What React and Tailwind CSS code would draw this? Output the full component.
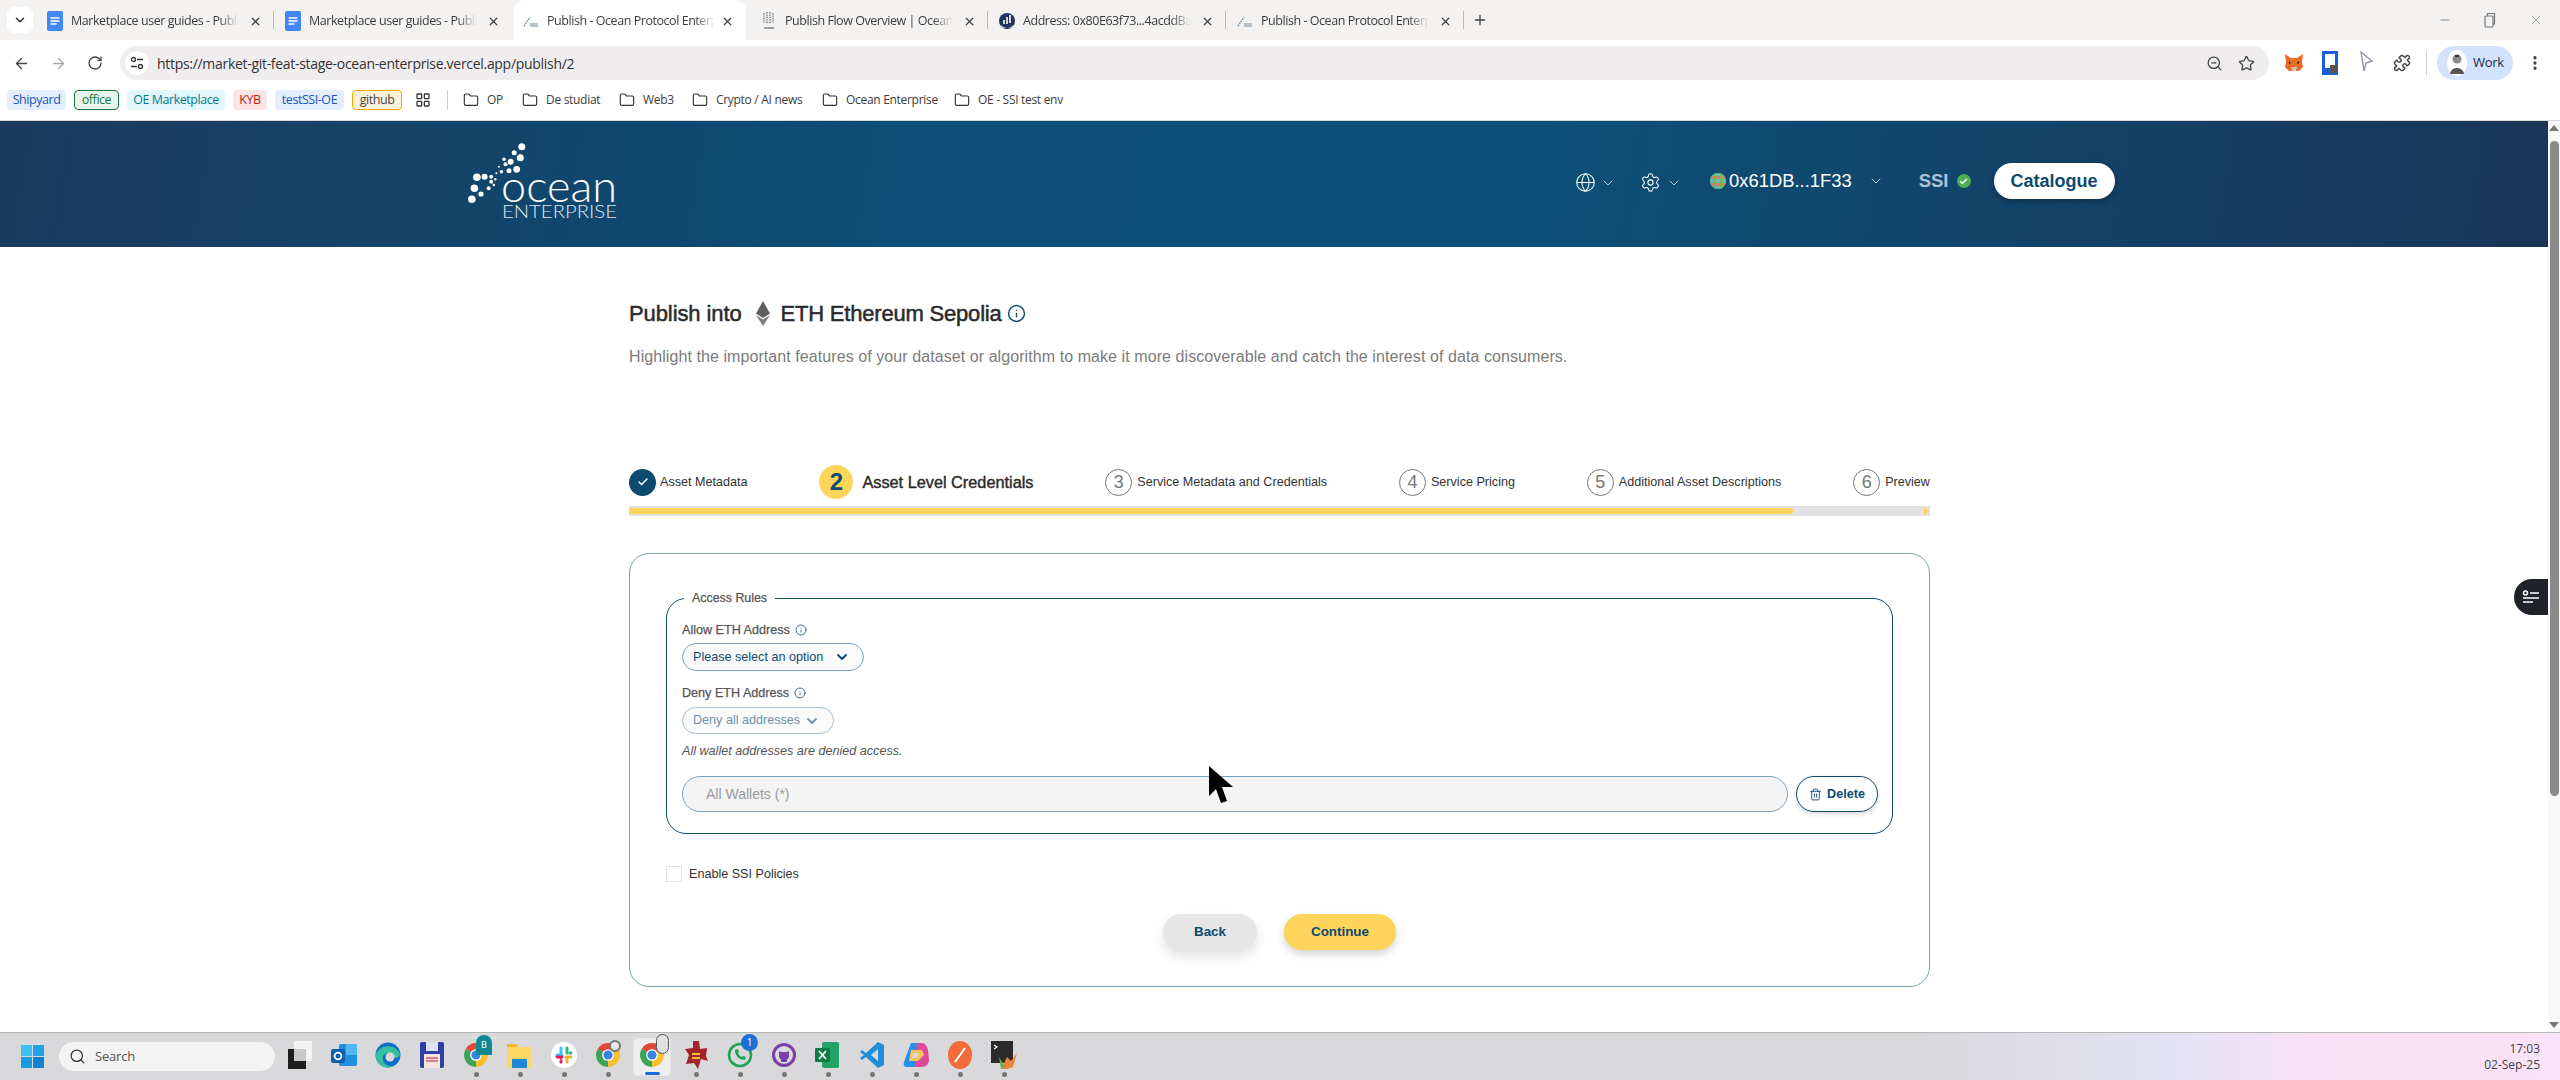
import React from 'react';
import {
  ArrowLeft, ArrowRight, RotateCw, ZoomOut, Star, Puzzle, MoreVertical, X, Plus, Minus,
  Search, LayoutGrid, Folder, Globe, Settings, ChevronDown, Info, Check, Trash2,
} from 'lucide-react';

const TABS = [
  { title: 'Marketplace user guides - Publi', icon: 'doc' },
  { title: 'Marketplace user guides - Publi', icon: 'doc' },
  { title: 'Publish - Ocean Protocol Enterp', icon: 'ocean', active: true },
  { title: 'Publish Flow Overview | Ocean Pr', icon: 'dots' },
  { title: 'Address: 0x80E63f73...4acddBaa', icon: 'scan' },
  { title: 'Publish - Ocean Protocol Enterp', icon: 'ocean' },
];

const CHIPS = [
  { label: 'Shipyard', cls: 'w-[59px] bg-[#e3edfb] text-[#1a55c0]' },
  { label: 'office', cls: 'w-[45px] bg-[#e9f4ed] text-[#1c7a3e] border border-[#1c7a3e]' },
  { label: 'OE Marketplace', cls: 'w-[98px] bg-[#e2f7fb] text-[#0b7a88]' },
  { label: 'KYB', cls: 'w-[34px] bg-[#fce4e4] text-[#c5221f]' },
  { label: 'testSSI-OE', cls: 'w-[69px] bg-[#e3edfb] text-[#1a55c0]' },
  { label: 'github', cls: 'w-[50px] bg-[#fef3d8] text-[#444444] border border-[#f0a800]' },
];

const FOLDERS = [
  { label: 'OP', cls: 'w-[59px]' },
  { label: 'De studiat', cls: 'w-[97px]' },
  { label: 'Web3', cls: 'w-[73px]' },
  { label: 'Crypto / AI news', cls: 'w-[130px]' },
  { label: 'Ocean Enterprise', cls: 'w-[132px]' },
  { label: 'OE - SSI test env', cls: 'w-[120px]' },
];

function DocIcon() {
  return (
    <svg width="16" height="20" viewBox="0 0 16 20">
      <rect width="16" height="20" rx="2" fill="#4285f4" />
      <path d="M3.5 7h9M3.5 10h9M3.5 13h6" stroke="#fff" strokeWidth="1.6" />
    </svg>
  );
}

function OceanFavicon() {
  return (
    <svg width="16" height="16" viewBox="0 0 16 16">
      <path d="M1 13 L7 4" stroke="#6f8ea3" strokeWidth="1.5" strokeDasharray="1.5 1" />
      <path d="M7 11h8M7 13h8" stroke="#9db1bf" strokeWidth="1.4" />
    </svg>
  );
}

function DotsFavicon() {
  return (
    <svg width="16" height="20" viewBox="0 0 16 20">
      <path d="M3 2v10M6 1v12M9 1v12M12 2v10" stroke="#77807f" strokeWidth="1.5" strokeDasharray="1.4 1" />
      <path d="M3 17h10" stroke="#9aa2a1" strokeWidth="2" />
    </svg>
  );
}

function ScanFavicon() {
  return (
    <svg width="16" height="18" viewBox="0 0 16 18">
      <circle cx="8" cy="9" r="8" fill="#21325b" />
      <path d="M2 13c4 4 9 4 12 0v3H2z" fill="#b9c8d6" />
      <path d="M5 12V8M8 12V5M11 11V3" stroke="#fff" strokeWidth="1.6" />
    </svg>
  );
}

const FAVICONS = { doc: DocIcon, ocean: OceanFavicon, dots: DotsFavicon, scan: ScanFavicon };

function Tab({ tab, hideSep }) {
  const Icon = FAVICONS[tab.icon];
  return (
    <div className={`relative flex h-[40px] items-center pr-[12px] pt-[2px] ${tab.active ? 'ml-[2px] mr-[4px] w-[232px] rounded-t-[10px] bg-white pl-[9px]' : 'w-[238px] pl-[11px]'}`}>
      <span className="flex w-[24px] shrink-0 items-center"><Icon /></span>
      <span className="w-[168px] overflow-hidden whitespace-nowrap text-[12.5px] text-[#3c3c3c] [font-family:'Open_Sans',sans-serif] tracking-[-0.45px] [mask-image:linear-gradient(90deg,#000_88%,transparent)]">{tab.title}</span>
      <X size={13} strokeWidth={2.4} className="ml-auto text-[#444444]" />
      {!hideSep && <span className="absolute right-0 top-[11px] h-[18px] w-px bg-[#b9b9b9]" />}
    </div>
  );
}

function TabStrip() {
  return (
    <div className="flex h-[40px] shrink-0 items-end bg-[#f3f2f1]">
      <div className="mb-[7px] ml-[7px] mr-[3px] flex h-[26px] w-[26px] items-center justify-center rounded-[7px] bg-white">
        <ChevronDown size={14} strokeWidth={2.6} className="text-[#333333]" />
      </div>
      {TABS.map((tab, i) => (
        <Tab key={i} tab={tab} hideSep={tab.active || i === 1} />
      ))}
      <Plus size={16} strokeWidth={2} className="mb-[12px] ml-[8px] text-[#444444]" />
      <div className="mb-[12px] ml-auto flex w-[122px] items-center justify-between pr-[16px] text-[#777777]">
        <Minus size={14} strokeWidth={1.4} />
        <svg width="12" height="16" viewBox="0 0 12 16" fill="none" stroke="#777777" strokeWidth="1.2">
          <rect x="1" y="4" width="8" height="11" rx="1" />
          <path d="M3.5 4V1.5h7V12H9" />
        </svg>
        <X size={16} strokeWidth={1.1} />
      </div>
    </div>
  );
}

function FoxIcon() {
  return (
    <svg width="18" height="24" viewBox="0 0 18 24">
      <path d="M0 3l6 4h6l6-4-1 8 1 5-4 4H4l-4-4 1-5z" fill="#f0682c" />
      <path d="M6 7l-1 6 4 2 4-2-1-6z" fill="#e2761b" />
      <path d="M6 16h6l-1 4H7z" fill="#d7c1b3" />
      <path d="M4 10l2 2-2 1zM14 10l-2 2 2 1z" fill="#2b1a12" />
    </svg>
  );
}

function Toolbar() {
  return (
    <div className="flex h-[40px] shrink-0 items-start bg-white pt-[6px] text-[#444444]">
      <div className="flex h-[34px] w-[120px] items-center pl-[13px]">
        <ArrowLeft size={17} strokeWidth={1.9} />
        <ArrowRight size={17} strokeWidth={1.9} className="ml-[20px] text-[#a8a8a8]" />
        <RotateCw size={16} strokeWidth={1.9} className="ml-[20px]" />
      </div>
      <div className="flex h-[34px] w-[2149px] items-center rounded-full bg-[#efedee] pl-[5px] pr-[14px]">
        <span className="flex h-[24px] w-[24px] items-center justify-center rounded-full bg-white">
          <svg width="14" height="14" viewBox="0 0 14 14" fill="none" stroke="#333333" strokeWidth="1.3">
            <circle cx="3.5" cy="3.5" r="2" />
            <circle cx="10.5" cy="10.5" r="2" />
            <path d="M7 3.5h6M1 10.5h6" />
          </svg>
        </span>
        <span className="ml-[8px] text-[14px] text-[#333333] [font-family:'Open_Sans',sans-serif] tracking-[-0.3px]">https://market-git-feat-stage-ocean-enterprise.vercel.app/publish/2</span>
        <ZoomOut size={17} strokeWidth={1.8} className="ml-auto" />
        <Star size={17} strokeWidth={1.8} className="ml-[15px]" />
      </div>
      <div className="flex h-[34px] flex-1 items-center pl-[16px]">
        <FoxIcon />
        <svg width="16" height="24" viewBox="0 0 16 24" className="ml-[19px]">
          <rect width="16" height="24" fill="#1a5fd8" />
          <path d="M3 3h10v11l-5 3H3z" fill="#fff" />
          <rect x="8" y="14" width="8" height="8" fill="#555555" />
        </svg>
        <svg width="14" height="24" viewBox="0 0 14 24" fill="none" className="ml-[21px]">
          <path d="M2 1l3 19 2-8 6-2z" stroke="#9b8fb0" strokeWidth="1.4" />
        </svg>
        <Puzzle size={18} strokeWidth={2} className="ml-[20px]" />
        <span className="ml-[15px] h-[24px] w-px bg-[#d0d0d0]" />
        <div className="ml-[10px] flex h-[34px] w-[76px] items-center rounded-full bg-[#d3e3fd] pl-[10px]">
          <svg width="20" height="26" viewBox="0 0 20 26">
            <ellipse cx="10" cy="13" rx="10" ry="13" fill="#ffffff" />
            <circle cx="10" cy="9" r="4.5" fill="#8a8a8a" />
            <path d="M8 6h4" stroke="#222222" strokeWidth="1.6" />
            <path d="M3 24c1-8 13-8 14 0z" fill="#555555" />
          </svg>
          <span className="ml-[6px] text-[13px] text-[#1c2b4a] [font-family:'Open_Sans',sans-serif] tracking-[-0.3px]">Work</span>
        </div>
        <MoreVertical size={18} strokeWidth={2.4} className="ml-[13px]" />
      </div>
    </div>
  );
}

function Bookmarks() {
  return (
    <div className="flex h-[41px] shrink-0 items-center border-b border-[#d8d8d8] bg-white pl-[7px] [font-family:'Open_Sans',sans-serif]">
      <div className="flex gap-[8px]">
        {CHIPS.map((c) => (
          <span key={c.label} className={`flex h-[20px] items-center justify-center rounded-[4px] text-[12.5px] tracking-[-0.45px] ${c.cls}`}>{c.label}</span>
        ))}
      </div>
      <LayoutGrid size={16} strokeWidth={1.9} className="ml-[13px] text-[#333333]" />
      <span className="ml-[16px] mr-[15px] h-[20px] w-px bg-[#d0d0d0]" />
      {FOLDERS.map((f) => (
        <div key={f.label} className={`flex items-center gap-[8px] ${f.cls}`}>
          <Folder size={16} strokeWidth={1.7} className="text-[#333333]" />
          <span className="whitespace-nowrap text-[12px] tracking-[-0.3px] text-[#3c3c3c]">{f.label}</span>
        </div>
      ))}
    </div>
  );
}

function OceanLogo() {
  const dots = [
    [53.8, 2.7, 3.5], [52.3, 13.7, 3.5], [46.2, 8.7, 2.5], [42.6, 17.7, 3], [48.7, 25.3, 3.4], [41, 26.7, 2.5], [36, 15.3, 1.8],
    [37.5, 20.3, 2], [33.4, 27.7, 1.8], [30.9, 22.7, 1], [28.3, 29.3, 1], [23.2, 32.7, 2], [16.6, 32.7, 3], [8.9, 33.3, 3.8],
    [27.3, 35.3, 1.2], [23.2, 37.7, 2], [25.8, 41, 1.2], [20.7, 44.3, 2], [13, 50, 2.6], [6.4, 44.3, 3.8], [3.8, 55.3, 3.8],
  ];
  return (
    <svg width="150" height="76" viewBox="0 0 150 76" className="overflow-visible">
      {dots.map(([x, y, r], i) => <circle key={i} cx={x} cy={y} r={r} fill="#ffffff" />)}
      <text x="33" y="58" fill="#ffffff" fontFamily="Lato, sans-serif" fontWeight="300" fontSize="44" textLength="116" lengthAdjust="spacingAndGlyphs">ocean</text>
      <text x="34" y="74" fill="#dfe8ef" fontFamily="Lato, sans-serif" fontWeight="300" fontSize="18" textLength="115" lengthAdjust="spacingAndGlyphs">ENTERPRISE</text>
    </svg>
  );
}

function Identicon() {
  return (
    <svg width="16" height="16" viewBox="0 0 16 16">
      <clipPath id="avatar"><circle cx="8" cy="8" r="8" /></clipPath>
      <g clipPath="url(#avatar)">
        <rect width="16" height="16" fill="#55c7b0" />
        <path d="M0 3h16v3H0zM0 10h16v3H0z" fill="#e8746a" />
        <path d="M3 0h3v16H3zM10 0h3v16h-3z" fill="#7fb35a" />
      </g>
    </svg>
  );
}

function Header() {
  return (
    <header className="flex h-[126px] shrink-0 items-start bg-[linear-gradient(100deg,#1c3a5e_0%,#0c4e75_35%,#0c5078_60%,#1a3558_100%)] pl-[468px] pt-[23px] text-white">
      <OceanLogo />
      <div className="ml-[957px] mt-[19px] flex h-[36px] items-center">
        <Globe size={21} strokeWidth={1.2} className="mt-[3px]" />
        <ChevronDown size={16} strokeWidth={1.3} className="ml-[4px] mt-[3px] text-[#cfdbe4]" />
        <Settings size={21} strokeWidth={1.2} className="ml-[24px] mt-[3px]" />
        <ChevronDown size={16} strokeWidth={1.3} className="ml-[5px] mt-[3px] text-[#cfdbe4]" />
        <span className="ml-[28px]"><Identicon /></span>
        <span className="ml-[3px] text-[18.4px] leading-none">0x61DB...1F33</span>
        <ChevronDown size={16} strokeWidth={1.3} className="ml-[16px] text-[#cfdbe4]" />
        <span className="ml-[35px] text-[18.5px] font-bold text-[#a9c0d8] leading-none">SSI</span>
        <span className="ml-[8px] flex h-[14px] w-[14px] items-center justify-center rounded-full bg-[#4fae52]">
          <Check size={9} strokeWidth={4} className="text-white" />
        </span>
        <button className="ml-[23px] h-[36px] w-[121px] rounded-full bg-white text-[18px] font-bold text-[#0d4a70] shadow-[0_2px_6px_rgba(0,0,0,0.3)]">Catalogue</button>
      </div>
    </header>
  );
}

function Step({ n, label, done, active }) {
  if (done) {
    return (
      <div className="flex items-center gap-[4px]">
        <span className="flex h-[27px] w-[27px] items-center justify-center rounded-full bg-[#0d4a70]">
          <Check size={12} strokeWidth={3} className="text-white" />
        </span>
        <span className="text-[12.6px] text-[#333333]">{label}</span>
      </div>
    );
  }
  if (active) {
    return (
      <div className="flex items-center gap-[9px]">
        <span className="flex h-[34px] w-[34px] items-center justify-center rounded-full bg-[#ffd45a] text-[24px] font-bold text-[#0d4a70]">{n}</span>
        <span className="text-[16.3px] text-[#2a2a2a] [-webkit-text-stroke:0.4px_#2a2a2a]">{label}</span>
      </div>
    );
  }
  return (
    <div className="flex items-center gap-[5px]">
      <span className="flex h-[27px] w-[27px] items-center justify-center rounded-full border border-[#777777] text-[18px] text-[#777777]">{n}</span>
      <span className="text-[12.6px] text-[#333333]">{label}</span>
    </div>
  );
}

function FieldLabel({ children }) {
  return (
    <div className="flex items-center gap-[5px] text-[12.6px] leading-[16px] text-[#555555] [-webkit-text-stroke:0.25px_#555555]">
      {children}
      <Info size={12} strokeWidth={1.6} className="text-[#0d4a70]" />
    </div>
  );
}

function PublishForm() {
  return (
    <section className="mt-[37px] flex h-[434px] w-[1301px] flex-col rounded-[20px] border border-[#7ba3bd] px-[36px] pt-[36px]">
      <fieldset className="h-[244px] rounded-[20px] border border-[#0d4a70] pl-[15px] pr-[14px]">
        <legend className="ml-[2px] px-[8px] text-[12.4px] leading-[16px] text-[#555555] [-webkit-text-stroke:0.25px_#555555]">Access Rules</legend>
        <div className="mt-[16px]"><FieldLabel>Allow ETH Address</FieldLabel></div>
        <button className="mt-[5px] flex h-[28px] w-[182px] items-center justify-between rounded-full border border-[#7ba3bd] bg-[#fafafa] pl-[10px] pr-[13px] text-[12.6px] text-[#0d4a70]">
          Please select an option
          <ChevronDown size={16} strokeWidth={2.8} />
        </button>
        <div className="mt-[14px]"><FieldLabel>Deny ETH Address</FieldLabel></div>
        <button className="mt-[6px] flex h-[27px] w-[152px] items-center justify-between rounded-full border border-[#a5c0d2] bg-[#fafafa] pl-[10px] pr-[13px] text-[12.6px] text-[#6a93ab]">
          Deny all addresses
          <ChevronDown size={16} strokeWidth={2.8} />
        </button>
        <p className="mt-[9px] text-[12.6px] italic leading-[16px] text-[#555555]">All wallet addresses are denied access.</p>
        <div className="mt-[17px] flex gap-[8px]">
          <div className="flex h-[36px] flex-1 items-center rounded-full border border-[#7ba3bd] bg-[#f4f4f4] pl-[23px] text-[14px] text-[#9a9a9a]">All Wallets (*)</div>
          <button className="flex h-[36px] w-[82px] items-center justify-center gap-[5px] rounded-full border border-[#0d4a70] bg-white text-[12.6px] font-semibold text-[#0d4a70] shadow-[0_2px_5px_rgba(0,0,0,0.15)]">
            <Trash2 size={13} strokeWidth={1.7} />
            Delete
          </button>
        </div>
      </fieldset>
      <label className="mt-[31px] flex items-center gap-[7px] text-[12.6px] text-[#333333]">
        <span className="h-[16px] w-[16px] border border-[#e2e2e2] bg-white" />
        Enable SSI Policies
      </label>
      <div className="mt-[30px] flex justify-center gap-[27px]">
        <button className="h-[36px] w-[94px] rounded-full bg-[#e6e6e6] text-[13.4px] font-bold text-[#0d4a70] shadow-[0_6px_12px_rgba(0,0,0,0.12)]">Back</button>
        <button className="h-[36px] w-[112px] rounded-full bg-[#ffd45a] text-[13.4px] font-bold text-[#0d4a70] shadow-[0_4px_8px_rgba(0,0,0,0.18)]">Continue</button>
      </div>
    </section>
  );
}

function Page() {
  return (
    <div className="relative flex min-w-0 flex-1 flex-col overflow-hidden bg-white [font-family:'Liberation_Sans',Arial,sans-serif]">
      <Header />
      <div className="pl-[629px]">
        <h1 className="mt-[53px] flex h-[26px] items-center text-[22px] font-normal tracking-[-0.1px] text-[#2a2a2a] [-webkit-text-stroke:0.5px_#2a2a2a]">
          Publish into
          <svg width="14" height="25" viewBox="0 0 14 25" className="ml-[14px] mr-[11px]">
            <path d="M7 0l7 12.5L7 17 0 12.5z" fill="#5f5f5f" />
            <path d="M7 18.5l7-4.5L7 25 0 14z" fill="#7d7d7d" />
          </svg>
          <span className="tracking-[-0.2px]">ETH Ethereum Sepolia</span>
          <Info size={19} strokeWidth={1.8} className="ml-[5px] text-[#0d4a70]" />
        </h1>
        <p className="mt-[19px] text-[16px] leading-[24px] tracking-[0.075px] text-[#7b7b7b]">
          Highlight the important features of your dataset or algorithm to make it more discoverable and catch the interest of data consumers.
        </p>
        <div className="mt-[96px] flex h-[34px] w-[1301px] items-center justify-between">
          <Step label="Asset Metadata" done />
          <Step n="2" label="Asset Level Credentials" active />
          <Step n="3" label="Service Metadata and Credentials" />
          <Step n="4" label="Service Pricing" />
          <Step n="5" label="Additional Asset Descriptions" />
          <Step n="6" label="Preview" />
        </div>
        <div className="relative mt-[7px] flex h-[10px] w-[1301px] items-center bg-[#e2e2e2]">
          <div className="h-[6px] w-[1164px] rounded-r-full bg-[#ffd45a]" />
          <span className="absolute right-[1px] h-0 w-0 border-y-[4px] border-l-[5px] border-y-transparent border-l-[#ffd45a]" />
        </div>
        <PublishForm />
      </div>
      {/* floating panel toggle */}
      <div className="absolute right-0 top-[458px] flex h-[36px] w-[34px] items-center justify-center rounded-l-full bg-[#1f2329]">
        <svg width="18" height="18" viewBox="0 0 18 18" fill="none" stroke="#ffffff" strokeWidth="1.5">
          <circle cx="3.5" cy="5" r="2" />
          <path d="M8 5h9M1 10h16M1 14h10" />
        </svg>
      </div>
      {/* mouse pointer */}
      <svg width="24" height="38" viewBox="0 0 24 38" className="absolute left-[1209px] top-[645px]">
        <path d="M0 0v30l7-7 5 14 6-2-5-14h11z" fill="#000000" />
      </svg>
    </div>
  );
}

function Scrollbar() {
  return (
    <div className="flex w-[12px] shrink-0 flex-col items-center bg-[#f8f8f8]">
      <span className="mt-[4px] h-0 w-0 border-x-[5px] border-b-[6px] border-x-transparent border-b-[#777777]" />
      <span className="mt-[10px] h-[655px] w-[9px] rounded-full bg-[#8b8b8b]" />
      <span className="mt-auto mb-[4px] h-0 w-0 border-x-[5px] border-t-[6px] border-x-transparent border-t-[#777777]" />
    </div>
  );
}

function Chrome({ badge }) {
  return (
    <span className="relative block h-[26px] w-[26px]">
      <svg width="26" height="26" viewBox="0 0 24 24">
        <path d="M12 12L2.47 6.5A11 11 0 0 1 21.53 6.5z" fill="#e0483a" />
        <path d="M12 12L21.53 6.5A11 11 0 0 1 12 23z" fill="#f5c02e" />
        <path d="M12 12L12 23A11 11 0 0 1 2.47 6.5z" fill="#3aa655" />
        <circle cx="12" cy="12" r="5.4" fill="#ffffff" />
        <circle cx="12" cy="12" r="4.2" fill="#3b82e6" />
      </svg>
      {badge}
    </span>
  );
}

const TASK_ICONS = [
  {
    dot: false,
    el: (
      <svg width="24" height="28" viewBox="0 0 24 28">
        <rect x="6" y="0" width="18" height="20" fill="#f4f4f4" />
        <rect x="0" y="8" width="18" height="20" fill="#1d1d1d" />
        <rect x="6" y="8" width="12" height="12" fill="#c8c8c8" />
      </svg>
    ),
  },
  {
    dot: false,
    el: (
      <svg width="26" height="26" viewBox="0 0 26 26">
        <rect x="8" y="2" width="18" height="22" rx="2" fill="#1f8fe0" />
        <rect x="15" y="2" width="11" height="11" fill="#50b8f0" />
        <rect x="0" y="7" width="14" height="14" rx="2" fill="#0f5fb0" />
        <circle cx="7" cy="14" r="3.4" fill="none" stroke="#fff" strokeWidth="1.8" />
      </svg>
    ),
  },
  {
    dot: false,
    el: (
      <svg width="26" height="26" viewBox="0 0 26 26">
        <circle cx="13" cy="13" r="12.5" fill="#0f6fc6" />
        <path d="M1 13C3 3 20 0 25 12c0 4-6 5-8 3 1-5-11-6-9 3 1 4 5 7 11 6-9 5-19-2-18-11z" fill="#35c1a0" />
        <circle cx="15" cy="15" r="4.5" fill="#d9d9dc" />
      </svg>
    ),
  },
  {
    dot: false,
    el: (
      <svg width="24" height="26" viewBox="0 0 24 26">
        <rect width="24" height="26" rx="2" fill="#2c3fa8" />
        <rect x="6" y="0" width="12" height="9" fill="#dfe3ef" />
        <rect x="4" y="12" width="16" height="14" fill="#f4e4df" />
        <path d="M6 16h12M6 19h12" stroke="#d65a5a" strokeWidth="1.4" />
      </svg>
    ),
  },
  {
    dot: true,
    el: (
      <Chrome badge={<span className="absolute -right-[3px] -top-[7px] flex h-[20px] w-[16px] items-center justify-center rounded-t-full bg-[#0f8a94] text-[9px] text-white">B</span>} />
    ),
  },
  {
    dot: true,
    el: (
      <svg width="26" height="26" viewBox="0 0 26 26">
        <path d="M0 2h9l2 3h0v21H0z" fill="#f0b429" />
        <rect y="5" width="24" height="21" rx="1" fill="#fdd663" />
        <rect x="5" y="17" width="15" height="9" rx="1" fill="#1e88d8" />
      </svg>
    ),
  },
  {
    dot: true,
    el: (
      <svg width="26" height="26" viewBox="0 0 26 26">
        <circle cx="13" cy="13" r="13" fill="#ffffff" />
        <path d="M10 6v5M6 13H11" stroke="#36c5f0" strokeWidth="3" strokeLinecap="round" />
        <path d="M16 6v5M20 11h-1" stroke="#2eb67d" strokeWidth="3" strokeLinecap="round" />
        <path d="M16 20v-5M20 15h-5" stroke="#ecb22e" strokeWidth="3" strokeLinecap="round" />
        <path d="M10 20v-1M6 15h5M10 15v1" stroke="#e01e5a" strokeWidth="3" strokeLinecap="round" />
      </svg>
    ),
  },
  {
    dot: true,
    el: <Chrome badge={<span className="absolute right-[0px] -top-[2px] h-[12px] w-[12px] rounded-full border-2 border-[#777777] bg-[#e8e8e8]" />} />,
  },
  {
    dot: true,
    active: true,
    el: <Chrome badge={<span className="absolute -right-[4px] -top-[8px] h-[20px] w-[13px] rounded-full bg-[#e0e0e0] border border-[#555555]" />} />,
  },
  {
    dot: true,
    el: (
      <svg width="24" height="28" viewBox="0 0 24 28">
        <path d="M9 0h6l1 8 7-1-1 8 2 5-7-2-3 10-4-6-8 1 3-9-4-6 8-1z" fill="#a3232b" />
        <path d="M8 13h8M8 17h8" stroke="#f5c02e" strokeWidth="1.8" />
      </svg>
    ),
  },
  {
    dot: true,
    el: (
      <span className="relative block h-[26px] w-[26px]">
        <svg width="26" height="26" viewBox="0 0 26 26" fill="none">
          <circle cx="13" cy="13" r="11" stroke="#23a455" strokeWidth="2.6" />
          <path d="M8 8c0 6 4 10 10 10l1-3-3-1-1 1c-2-1-3-2-4-4l1-1-1-3z" fill="#23a455" />
        </svg>
        <span className="absolute -right-[5px] -top-[8px] flex h-[17px] w-[17px] items-center justify-center rounded-full bg-[#1a6fd8] text-[10px] text-white">1</span>
      </span>
    ),
  },
  {
    dot: true,
    el: (
      <svg width="24" height="26" viewBox="0 0 24 26" fill="none">
        <circle cx="12" cy="13" r="10.5" stroke="#7a3fa8" strokeWidth="3" />
        <path d="M7 9l2 1h6l2-1v6l-2 3v2H9v-2l-2-3z" fill="#7a3fa8" />
      </svg>
    ),
  },
  {
    dot: true,
    el: (
      <svg width="26" height="28" viewBox="0 0 26 28">
        <rect x="7" y="1" width="17" height="26" rx="2" fill="#22a366" />
        <rect x="0" y="7" width="15" height="14" rx="1" fill="#107c41" />
        <path d="M4 10l7 8M11 10l-7 8" stroke="#ffffff" strokeWidth="1.7" />
      </svg>
    ),
  },
  {
    dot: true,
    el: (
      <svg width="24" height="26" viewBox="0 0 24 26">
        <path d="M18 0l6 3v20l-6 3L6 15l-4 3-2-2 4-3-4-3 2-2 4 3z" fill="#1f8fd8" />
        <path d="M18 7l-7 6 7 6z" fill="#d9d9dc" />
      </svg>
    ),
  },
  {
    dot: true,
    el: (
      <svg width="26" height="26" viewBox="0 0 26 26">
        <path d="M8 1h10l-6 24H4c-3 0-4-2-3-5z" fill="#2a8fe8" />
        <path d="M14 1h5c3 0 5 3 6 7l1 10c0 4-3 7-7 7h-7z" fill="#e0489a" />
        <path d="M8 8h11l2 5-6 6H6z" fill="#f5c45a" />
        <path d="M10 11h6l-2 5H9z" fill="#d9d9dc" />
      </svg>
    ),
  },
  {
    dot: true,
    el: (
      <svg width="24" height="28" viewBox="0 0 24 28">
        <ellipse cx="12" cy="14" rx="12" ry="14" fill="#f26b38" />
        <path d="M7 21L17 7" stroke="#ffffff" strokeWidth="2" />
      </svg>
    ),
  },
  {
    dot: true,
    el: (
      <svg width="26" height="28" viewBox="0 0 26 28">
        <rect width="22" height="22" fill="#2b2b2b" />
        <path d="M3 4l3 2-3 2" stroke="#ffffff" strokeWidth="1.2" fill="none" />
        <path d="M10 28l6-12 4 4 6-8-4 14-6 2z" fill="#e9853a" />
        <path d="M8 16l6 10-4 2z" fill="#5fb548" />
      </svg>
    ),
  },
];

function Taskbar() {
  return (
    <div className="flex h-[48px] shrink-0 items-center border-t border-[#b5b5b5] bg-[linear-gradient(90deg,#d9d9dc_0%,#d9d9dc_75%,#e3e2f4_85%,#f9e2f8_90%,#f9e0f2_95%,#f9e3fa_100%)] pl-[21px]">
      <svg width="23" height="23" viewBox="0 0 23 23">
        <path d="M0 0h11v11H0z" fill="#3fc0f2" />
        <path d="M12 0h11v11H12z" fill="#1fa2e8" />
        <path d="M0 12h11v11H0z" fill="#1a9be0" />
        <path d="M12 12h11v11H12z" fill="#1281cf" />
      </svg>
      <div className="ml-[14px] flex h-[31px] w-[218px] items-center rounded-full border border-[#d8d8d8] bg-[#f3f3f3] pl-[10px] text-[13px] text-[#555555] [font-family:'Open_Sans',sans-serif]">
        <Search size={17} strokeWidth={1.8} className="text-[#333333]" />
        <span className="ml-[9px] tracking-[-0.2px]">Search</span>
      </div>
      <div className="ml-[2px] flex">
        {TASK_ICONS.map((t, i) => (
          <div key={i} className="relative flex h-[48px] w-[44px] items-center justify-center">
            {t.active && <span className="absolute inset-x-[3px] top-[5px] h-[38px] rounded-[4px] border border-[#e4e4e4] bg-[#eeeeee]" />}
            <span className="relative -mt-[4px]">{t.el}</span>
            {t.dot && !t.active && <span className="absolute bottom-[4px] h-[5px] w-[5px] rounded-full bg-[#777777]" />}
            {t.active && <span className="absolute bottom-[6px] h-[3px] w-[15px] rounded-full bg-[#0f6fd8]" />}
          </div>
        ))}
      </div>
      <div className="ml-auto pr-[20px] text-right text-[12px] leading-[16px] text-[#444444] [font-family:'Open_Sans',sans-serif]">
        <div>17:03</div>
        <div>02-Sep-25</div>
      </div>
    </div>
  );
}

export default function App() {
  return (
    <div className="flex h-[1080px] w-[2560px] flex-col overflow-hidden">
      <TabStrip />
      <Toolbar />
      <Bookmarks />
      <div className="flex min-h-0 flex-1">
        <Page />
        <Scrollbar />
      </div>
      <Taskbar />
    </div>
  );
}
